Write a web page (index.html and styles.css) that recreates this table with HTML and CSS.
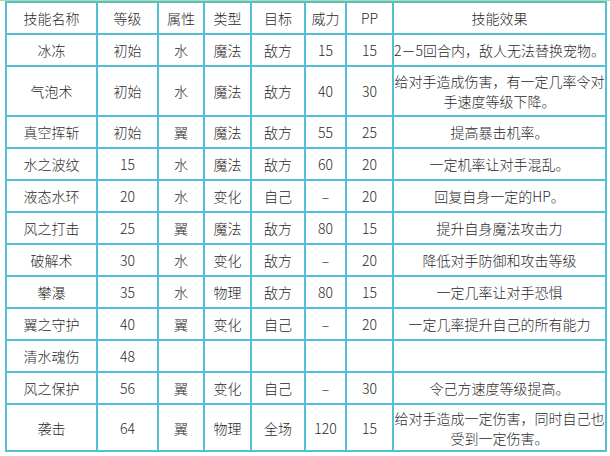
FILE: index.html
```html
<!DOCTYPE html>
<html lang="zh-CN">
<head>
<meta charset="utf-8">
<title>技能表</title>
<link rel="stylesheet" href="styles.css">
</head>
<body>
<div class="topline"></div>
<table class="skills">
<colgroup>
<col class="c-name"><col class="c-lv"><col class="c-attr"><col class="c-type"><col class="c-tgt"><col class="c-pow"><col class="c-pp"><col class="c-eff">
</colgroup>
<tr class="row"><td>技能名称</td><td>等级</td><td>属性</td><td>类型</td><td>目标</td><td>威力</td><td>PP</td><td>技能效果</td></tr>
<tr class="row"><td>冰冻</td><td>初始</td><td>水</td><td>魔法</td><td>敌方</td><td>15</td><td>15</td><td class="eff left">2－5回合内，敌人无法替换宠物。</td></tr>
<tr class="tall"><td>气泡术</td><td>初始</td><td>水</td><td>魔法</td><td>敌方</td><td>40</td><td>30</td><td class="eff">给对手造成伤害，有一定几率令对手速度等级下降。</td></tr>
<tr class="row"><td>真空挥斩</td><td>初始</td><td>翼</td><td>魔法</td><td>敌方</td><td>55</td><td>25</td><td class="eff">提高暴击机率。</td></tr>
<tr class="row"><td>水之波纹</td><td>15</td><td>水</td><td>魔法</td><td>敌方</td><td>60</td><td>20</td><td class="eff">一定机率让对手混乱。</td></tr>
<tr class="row"><td>液态水环</td><td>20</td><td>水</td><td>变化</td><td>自己</td><td>–</td><td>20</td><td class="eff">回复自身一定的HP。</td></tr>
<tr class="row"><td>风之打击</td><td>25</td><td>翼</td><td>魔法</td><td>敌方</td><td>80</td><td>15</td><td class="eff">提升自身魔法攻击力</td></tr>
<tr class="row"><td>破解术</td><td>30</td><td>水</td><td>变化</td><td>敌方</td><td>–</td><td>20</td><td class="eff">降低对手防御和攻击等级</td></tr>
<tr class="row"><td>攀瀑</td><td>35</td><td>水</td><td>物理</td><td>敌方</td><td>80</td><td>15</td><td class="eff">一定几率让对手恐惧</td></tr>
<tr class="row"><td>翼之守护</td><td>40</td><td>翼</td><td>变化</td><td>自己</td><td>–</td><td>20</td><td class="eff">一定几率提升自己的所有能力</td></tr>
<tr class="row"><td>清水魂伤</td><td>48</td><td></td><td></td><td></td><td></td><td></td><td class="eff"></td></tr>
<tr class="row"><td>风之保护</td><td>56</td><td>翼</td><td>变化</td><td>自己</td><td>–</td><td>30</td><td class="eff">令己方速度等级提高。</td></tr>
<tr class="tall last"><td>袭击</td><td>64</td><td>翼</td><td>物理</td><td>全场</td><td>120</td><td>15</td><td class="eff">给对手造成一定伤害，同时自己也受到一定伤害。</td></tr>
</table>
</body>
</html>
```
FILE: styles.css
```css
html, body {
  margin: 0;
  padding: 0;
  background: #ffffff;
}
body {
  font-family: "Noto Sans CJK SC", "DejaVu Sans", sans-serif;
  font-size: 14px;
  font-weight: 300;
  color: #2a2a2a;
}
.topline {
  height: 1px;
  background: #b4dd8e;
}
.skills {
  border-collapse: collapse;
  table-layout: fixed;
  width: 600px;
  margin-left: 5px;
}
.skills td {
  border: 2px solid #55bfd6;
  text-align: center;
  vertical-align: middle;
  padding: 0;
  line-height: 20px;
}
.row td { height: 30px; }
.tall td { height: 48px; }
.tall.last td { height: 45px; }
.c-name { width: 91px; }
.c-lv { width: 61px; }
.c-attr { width: 46px; }
.c-type { width: 47px; }
.c-tgt { width: 54px; }
.c-pow { width: 41px; }
.c-pp { width: 47px; }
.c-eff { width: 213px; }
.eff.left {
  text-align: left;
  white-space: nowrap;
}
```
